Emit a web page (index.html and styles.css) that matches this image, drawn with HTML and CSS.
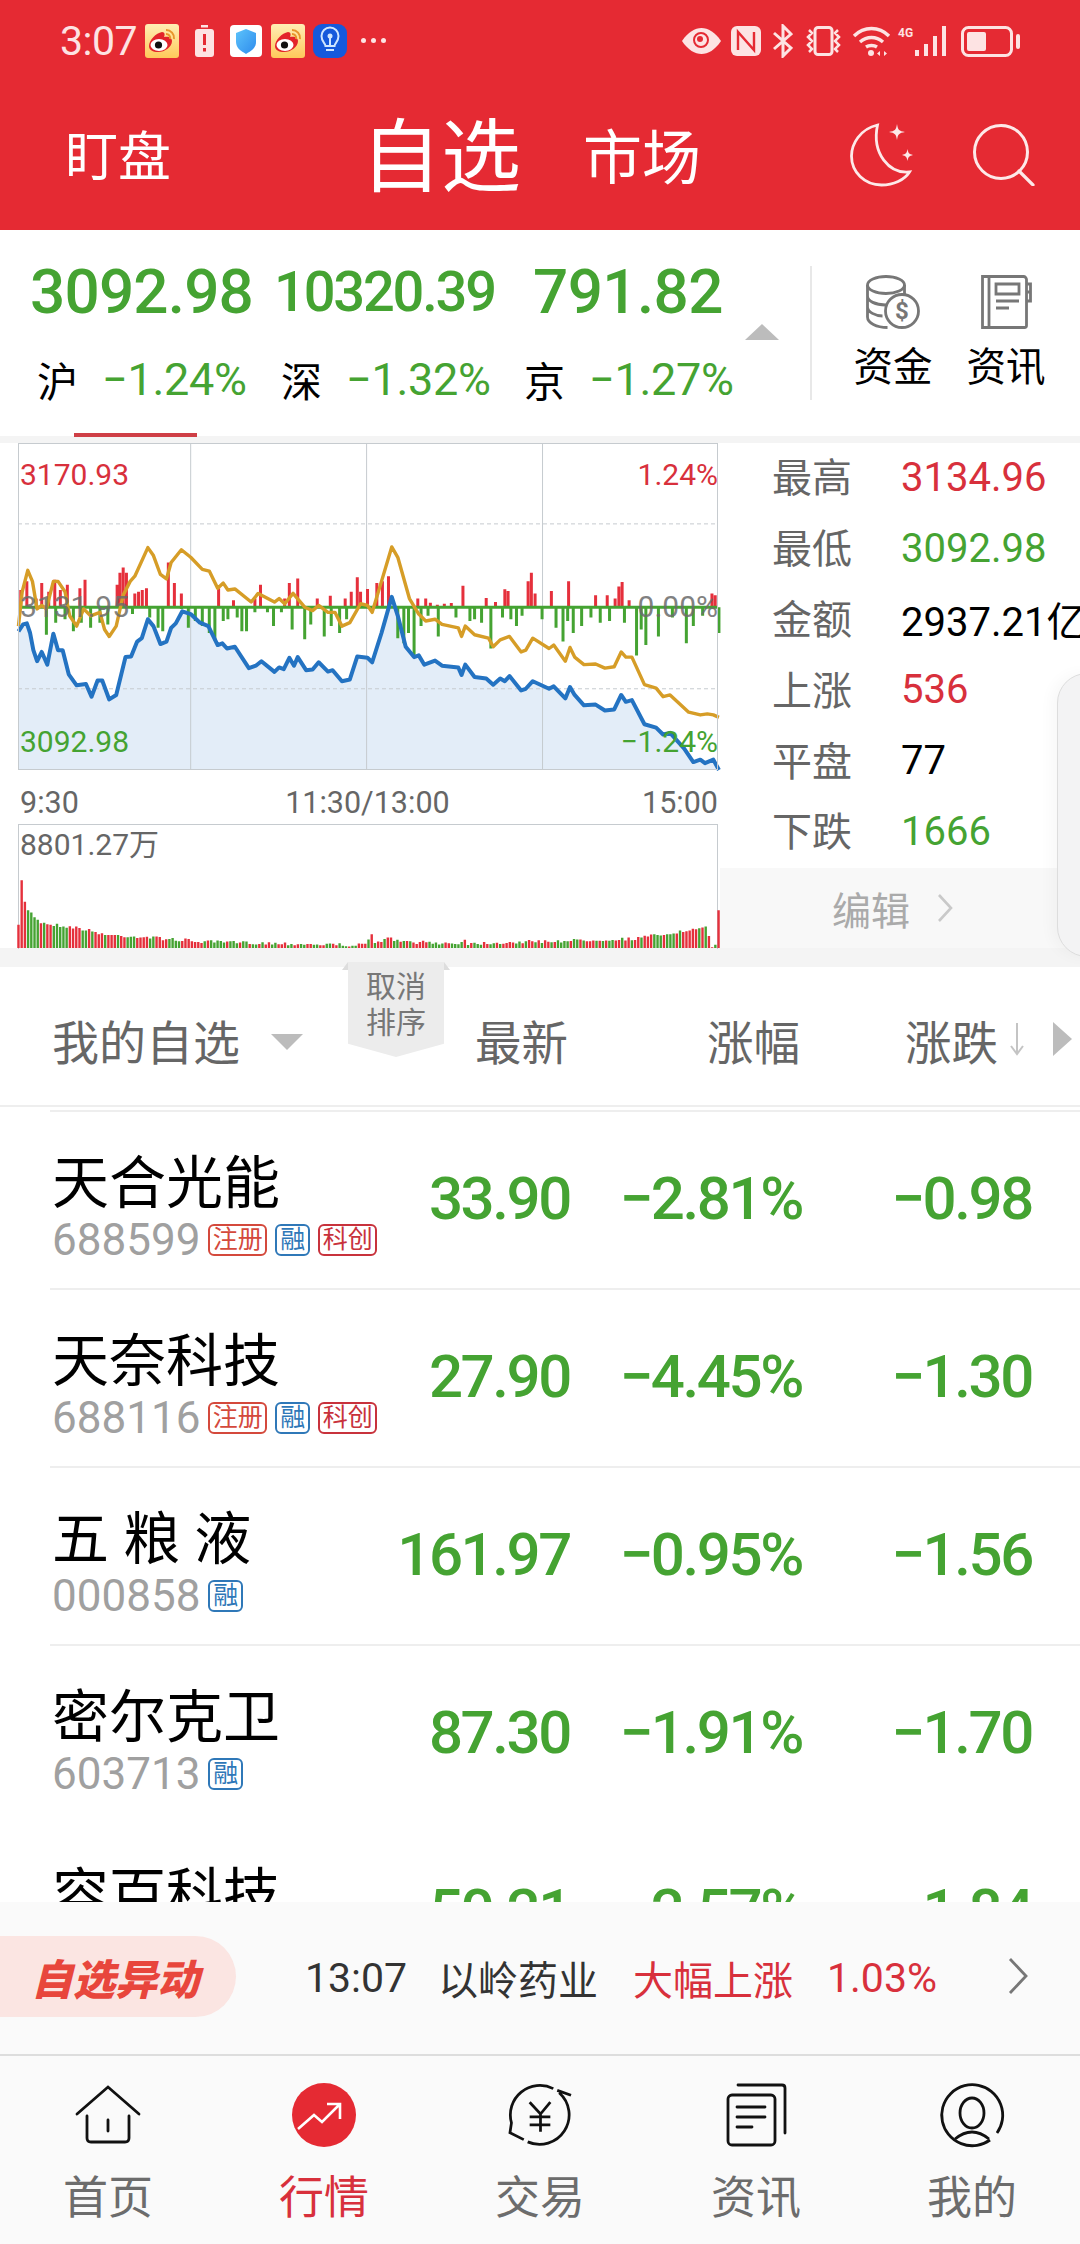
FILE: index.html
```html
<!DOCTYPE html>
<html lang="zh-CN">
<head>
<meta charset="utf-8">
<title>自选</title>
<link rel="stylesheet" href="styles.css">
</head>
<body>
<svg class="defs" width="0" height="0" aria-hidden="true">
  <defs>
    <linearGradient id="wbg" x1="0" y1="0" x2="0" y2="1"><stop offset="0" stop-color="#ffeeb5"/><stop offset="1" stop-color="#ffc95a"/></linearGradient>
    <linearGradient id="shg" x1="0" y1="0" x2="1" y2="1"><stop offset="0" stop-color="#5cc3fb"/><stop offset="1" stop-color="#2e8bec"/></linearGradient>
    <symbol id="weibo" viewBox="0 0 34 34">
      <rect width="34" height="34" rx="3" fill="url(#wbg)"/>
      <path d="M4 22c0-6 7-13 13-14 3 0 3 3 2 5 4-1 8 0 8 4 0 6-7 11-14 11-5 0-9-2-9-6z" fill="#e3232a"/>
      <ellipse cx="14" cy="21" rx="8.5" ry="6" fill="#fff"/>
      <circle cx="13.5" cy="21" r="3.6" fill="#111"/>
      <path d="M21 6a8 8 0 0 1 8 9M21 10a4 4 0 0 1 4 5" fill="none" stroke="#e8952c" stroke-width="2"/>
    </symbol>
  </defs>
</svg>
<div class="app">
  <header class="top">
    <div class="status">
      <span class="clock">3:07</span>
      <svg class="si s-w1"><use href="#weibo"/></svg>
      <svg class="s-batt" viewBox="0 0 19 32"><rect x="6" width="7" height="2.5" fill="#fde3e3"/><rect y="4" width="19" height="28" rx="3" fill="#fde3e3"/><rect x="8" y="9" width="3" height="11" fill="#e52a33"/><rect x="8" y="23" width="3" height="3.5" fill="#e52a33"/></svg>
      <svg class="s-shield" viewBox="0 0 32 32"><rect width="32" height="32" rx="4" fill="#fff"/><path d="M16 4l10 4v9c0 6-5 9-10 12C11 26 6 23 6 17V8z" fill="url(#shg)"/></svg>
      <svg class="si s-w2"><use href="#weibo"/></svg>
      <svg class="s-bulb" viewBox="0 0 34 34"><rect width="34" height="34" rx="9" fill="#1559dc"/><path d="M12.500 22c0-3-4-4-4-10a8.500 8.500 0 0 1 17 0c0 6-4 7-4 10zM13 26h8" fill="none" stroke="#cfe6ff" stroke-width="2"/><path d="M17 12v9" stroke="#cfe6ff" stroke-width="2"/><circle cx="17" cy="12" r="2.500" fill="#cfe6ff"/></svg>
      <span class="s-dots"><i></i><i></i><i></i></span>
      <span class="status-gap"></span>
      <svg class="r-eye" viewBox="0 0 39 26"><path d="M0 13C6 4 13 0 19.500 0S33 4 39 13c-6 9-13 13-19.500 13S6 22 0 13z" fill="#fde3e3"/><circle cx="19" cy="12" r="7" fill="none" stroke="#e52a33" stroke-width="2"/><circle cx="18" cy="11" r="3" fill="#e52a33"/></svg>
      <svg class="r-nfc" viewBox="0 0 30 30"><rect width="30" height="30" rx="6" fill="#fde3e3"/><path d="M7 24V6l16 18V6" fill="none" stroke="#e52a33" stroke-width="2.400"/></svg>
      <svg class="r-bt" viewBox="0 0 21 34"><path d="M2 9l17 15-8 8V2l8 8L2 25" fill="none" stroke="#fde3e3" stroke-width="3"/></svg>
      <svg class="r-vib" viewBox="0 0 37 30"><rect x="10" y="1.500" width="17" height="27" rx="3" fill="none" stroke="#fde3e3" stroke-width="3"/><path d="M4 4l3 3-4 4 4 4-4 4 4 4-3 3M33 4l-3 3 4 4-4 4 4 4-4 4 3 3" fill="none" stroke="#fde3e3" stroke-width="2.500"/></svg>
      <svg class="r-wifi" viewBox="0 0 39 30"><path d="M2 10c10-10 25-10 35 0M8 16c7-6 16-6 23 0M14 21c3-2 8-2 11 0" fill="none" stroke="#fde3e3" stroke-width="3.400"/><circle cx="19" cy="27" r="3" fill="#fde3e3"/><path d="M28 25v5l-3-2.500zM32 25v5l3-2.500z" fill="#fde3e3"/></svg>
      <span class="r-sig"><b class="r-4g">4G</b><svg viewBox="0 0 32 30"><path d="M2 24v6M11 18v12M20 10v20M29 0v30" stroke="#fde3e3" stroke-width="4" fill="none"/></svg></span>
      <svg class="r-bat" viewBox="0 0 59 31"><rect x="1.500" y="1.500" width="49" height="28" rx="6" fill="none" stroke="#fde3e3" stroke-width="3"/><rect x="6" y="6" width="19" height="19" rx="2" fill="#fde3e3"/><rect x="55" y="8" width="4" height="15" rx="2" fill="#fde3e3"/></svg>
    </div>
    <nav class="nav">
      <span class="nav-a">盯盘</span>
      <span class="nav-b">自选</span>
      <span class="nav-c">市场</span>
      <svg class="moon" viewBox="0 0 64 64"><path d="M27.500 2C10 6 1.500 21 1.500 33c0 16 13 29 30 29 12 0 23-5 28-13-20 2-38-18-32-47z" fill="none" stroke="#fde9e9" stroke-width="2.800"/><path d="M47 1c1 6 2 7 8 8-6 1-7 2-8 8-1-6-2-7-8-8 6-1 7-2 8-8zM57.500 26c.7 4 1.500 5 5.500 6-4 1-4.800 2-5.500 6-.7-4-1.500-5-5.500-6 4-1 4.800-2 5.500-6z" fill="#fde9e9"/></svg>
      <svg class="search" viewBox="0 0 62 62"><circle cx="28" cy="28" r="26.500" fill="none" stroke="#fde9e9" stroke-width="3"/><path d="M46 47l14 14" stroke="#fde9e9" stroke-width="3.200" stroke-linecap="round"/></svg>
    </nav>
  </header>

  <section class="indexes">
    <div class="idx">
      <span class="idx-val">3092.98</span>
      <div class="idx-sub"><span class="idx-name">沪</span><span class="idx-pct">−1.24%</span></div>
    </div>
    <div class="idx">
      <span class="idx-val idx-small">10320.39</span>
      <div class="idx-sub"><span class="idx-name">深</span><span class="idx-pct">−1.32%</span></div>
    </div>
    <div class="idx">
      <span class="idx-val idx-third">791.82</span>
      <div class="idx-sub"><span class="idx-name">京</span><span class="idx-pct">−1.27%</span></div>
    </div>
    <span class="idx-caret"></span>
    <div class="quick">
      <div class="quick-item">
        <svg class="q-icon" viewBox="0 0 54 54"><g fill="none" stroke="#777" stroke-width="2.800"><ellipse cx="20" cy="10" rx="18.500" ry="8.500"/><path d="M1.500 10v32c0 6 9 10.500 20 10.500M38.500 10v12M1.500 21c0 5 8 9 18 9 5 0 10-1 13-3M1.500 32c0 5 8 9 15 9"/><circle cx="36" cy="36" r="16.500" fill="#fff"/></g><text class="q-dollar" x="36" y="44">$</text></svg>
        <span>资金</span>
      </div>
      <div class="quick-item">
        <svg class="q-icon q-book" viewBox="0 0 51 54"><g fill="none" stroke="#777" stroke-width="2.800"><path d="M1.500 1.500h41a3 3 0 0 1 3 3v46a2 2 0 0 1-2 2h-42zM8 1.500v51M15 9h23v10H15z"/><path d="M15 26h23M15 33h13M45.500 9h4v17h-4M45.500 17h4"/></g></svg>
        <span>资讯</span>
      </div>
    </div>
    <span class="idx-mark"></span>
  </section>

  <section class="market">
    <div class="chart-col">
      <div class="plot">
        <svg class="plot-svg" viewBox="39 38 1504 950" preserveAspectRatio="none">
          <path class="area" d="M40 585L50 565 58 562 65 590 72 640 80 672 90 645 102 682 115 592 125 640 135 640 148 710 165 742 185 738 197 775 210 728 220 728 235 783 250 770 270 660 282 658 295 615 305 605 318 550 330 570 345 622 358 615 368 575 378 562 392 527 410 535 430 560 448 570 468 625 478 620 488 635 505 630 535 692 550 685 562 672 590 703 600 690 610 695 622 662 632 685 640 660 658 698 672 696 685 675 705 702 715 698 735 730 752 725 768 658 790 662 800 675 820 590 842 485 855 540 872 630 890 660 900 655 912 682 935 670 950 685 985 690 992 712 1000 682 1020 718 1045 722 1060 740 1075 722 1085 730 1095 715 1120 757 1130 752 1145 730 1180 752 1190 745 1215 780 1225 747 1235 770 1255 800 1280 798 1300 815 1320 812 1335 770 1345 790 1358 785 1385 855 1410 865 1425 885 1440 880 1470 925 1490 965 1505 958 1515 968 1533 958 1545 988 40 988Z"/>
          <path class="grid-l" d="M410 38V988M788 38V988M1166 38V988"/>
          <path class="grid-d" d="M39 273H1543M39 752H1543"/>
          <path class="bar-r" d="M45 515V465M58 515V440M78 515V490M90 515V445M105 515V470M118 515V435M130 515V465M145 515V450M172 515V460M183 515V435M252 515V450M258 515V415M265 515V400M272 515V415M290 515V475M298 515V470M306 515V465M315 515V460M362 515V385M375 515V445M390 515V475M470 515V460M502 515V495M548 515V490M560 515V450M612 515V490M622 515V445M640 515V432M682 515V490M710 515V482M742 515V490M755 515V470M768 515V428M775 515V470M790 515V462M810 515V445M822 515V440M835 515V425M898 515V490M915 515V490M925 515V502M940 515V508M955 515V505M970 515V503M995 515V453M1045 515V488M1065 515V500M1085 515V463M1092 515V468M1135 515V440M1142 515V415M1150 515V475M1185 515V468M1222 515V440M1280 515V480M1305 515V480M1322 515V490M1330 515V455M1337 515V442M1352 515V495M1530 515V475M1537 515V480"/>
          <path class="bar-g" d="M39 515H1543M100 515V595M120 515V560M140 515V550M158 515V585M175 515V560M195 515V575M215 515V560M232 515V565M285 515V535M322 515V545M340 515V575M350 515V585M390 515V520M405 515V575M420 515V555M435 515V570M450 515V590M462 515V612M480 515V555M490 515V550M510 515V545M520 515V585M530 515V585M548 515V530M575 515V530M588 515V570M605 515V530M628 515V580M655 515V608M668 515V565M697 515V600M712 515V570M730 515V590M745 515V550M855 515V605M868 515V620M878 515V590M890 515V660M905 515V570M920 515V540M942 515V600M980 515V545M1010 515V555M1020 515V550M1035 515V560M1055 515V635M1080 515V545M1098 515V550M1110 515V570M1122 515V540M1165 515V550M1195 515V575M1210 515V615M1220 515V555M1232 515V590M1250 515V570M1270 515V545M1290 515V560M1310 515V555M1342 515V560M1368 515V655M1378 515V580M1388 515V625M1415 515V600M1445 515V545M1475 515V620M1490 515V570M1510 515V540M1545 515V590"/>
          <path class="line-gold" d="M40 570L48 470 60 408 70 440 80 520 90 510 100 520 115 440 125 440 140 470 150 540 165 570 180 520 195 540 215 530 225 580 235 600 250 570 265 480 280 440 290 425 318 342 330 365 345 420 358 433 368 385 390 348 410 370 435 405 450 410 468 460 480 445 490 465 505 462 540 500 555 475 590 500 600 490 612 505 630 475 655 515 672 525 685 510 705 530 720 530 735 570 752 560 775 505 790 510 800 530 820 440 842 340 855 370 880 490 900 535 915 555 935 550 950 565 985 575 992 600 1000 570 1020 595 1050 605 1060 630 1075 610 1095 600 1120 645 1130 640 1145 605 1180 635 1190 625 1215 672 1225 632 1235 660 1255 682 1280 680 1300 692 1320 688 1335 645 1345 660 1358 660 1385 740 1410 750 1425 775 1440 770 1480 820 1505 828 1520 825 1533 828 1545 835"/>
          <path class="line-blue" d="M40 585L50 565 58 562 65 590 72 640 80 672 90 645 102 682 115 592 125 640 135 640 148 710 165 742 185 738 197 775 210 728 220 728 235 783 250 770 270 660 282 658 295 615 305 605 318 550 330 570 345 622 358 615 368 575 378 562 392 527 410 535 430 560 448 570 468 625 478 620 488 635 505 630 535 692 550 685 562 672 590 703 600 690 610 695 622 662 632 685 640 660 658 698 672 696 685 675 705 702 715 698 735 730 752 725 768 658 790 662 800 675 820 590 842 485 855 540 872 630 890 660 900 655 912 682 935 670 950 685 985 690 992 712 1000 682 1020 718 1045 722 1060 740 1075 722 1085 730 1095 715 1120 757 1130 752 1145 730 1180 752 1190 745 1215 780 1225 747 1235 770 1255 800 1280 798 1300 815 1320 812 1335 770 1345 790 1358 785 1385 855 1410 865 1425 885 1440 880 1470 925 1490 965 1505 958 1515 968 1533 958 1545 988"/>
        </svg>
        <span class="pl pl-tl up">3170.93</span>
        <span class="pl pl-tr up">1.24%</span>
        <span class="pl pl-ml mid">3131.95</span>
        <span class="pl pl-mr mid">0.00%</span>
        <span class="pl pl-bl down">3092.98</span>
        <span class="pl pl-br down">−1.24%</span>
      </div>
      <div class="axis"><span>9:30</span><span class="axis-mid">11:30/13:00</span><span>15:00</span></div>
      <div class="vol">
        <svg class="vol-svg" viewBox="39 1142 1504 361" preserveAspectRatio="none">
          <path id="vol-r" class="vb-r"/>
          <path id="vol-g" class="vb-g"/>
        </svg>
        <span class="vol-label">8801.27万</span>
      </div>
    </div>
    <aside class="stats">
      <dl class="stat-grid">
        <dt>最高</dt><dd class="up">3134.96</dd>
        <dt>最低</dt><dd class="down">3092.98</dd>
        <dt>金额</dt><dd>2937.21亿</dd>
        <dt>上涨</dt><dd class="up">536</dd>
        <dt>平盘</dt><dd>77</dd>
        <dt>下跌</dt><dd class="down">1666</dd>
      </dl>
      <div class="edit"><span>编辑</span><svg class="edit-chev" viewBox="0 0 16 30"><path d="M2 2l12 13L2 28" fill="none" stroke="#c9c9c9" stroke-width="2.600"/></svg></div>
    </aside>
    <div class="side-tab"></div>
  </section>

  <section class="list">
    <div class="list-head">
      <div class="lh-name"><span>我的自选</span><i class="lh-caret"></i></div>
      <span class="lh-col">最新</span>
      <span class="lh-col">涨幅</span>
      <span class="lh-col lh-sort">涨跌<svg class="lh-arrow" viewBox="0 0 14 34"><path d="M7 1v31M1 24l6 8 6-8" fill="none" stroke="#c4c4c4" stroke-width="2"/></svg></span>
      <i class="lh-next"></i>
    </div>
    <div class="sort-tag"><span>取消</span><span>排序</span></div>
    <div class="rows">
      <article class="row">
        <div class="who"><div class="name">天合光能</div><div class="code">688599<span class="tag t-reg">注册</span><span class="tag t-rz">融</span><span class="tag t-kc">科创</span></div></div>
        <span class="num">33.90</span><span class="num">−2.81%</span><span class="num">−0.98</span>
      </article>
      <article class="row">
        <div class="who"><div class="name">天奈科技</div><div class="code">688116<span class="tag t-reg">注册</span><span class="tag t-rz">融</span><span class="tag t-kc">科创</span></div></div>
        <span class="num">27.90</span><span class="num">−4.45%</span><span class="num">−1.30</span>
      </article>
      <article class="row">
        <div class="who"><div class="name">五 粮 液</div><div class="code">000858<span class="tag t-rz">融</span></div></div>
        <span class="num">161.97</span><span class="num">−0.95%</span><span class="num">−1.56</span>
      </article>
      <article class="row">
        <div class="who"><div class="name">密尔克卫</div><div class="code">603713<span class="tag t-rz">融</span></div></div>
        <span class="num">87.30</span><span class="num">−1.91%</span><span class="num">−1.70</span>
      </article>
      <article class="row row-last">
        <div class="who"><div class="name">容百科技</div></div>
        <span class="num">50.21</span><span class="num">−2.57%</span><span class="num">−1.84</span>
      </article>
    </div>
  </section>

  <section class="ticker">
    <div class="pill">自选异动</div>
    <span class="t-time">13:07</span>
    <span class="t-stock">以岭药业</span>
    <span class="t-event">大幅上涨</span>
    <span class="t-pct">1.03%</span>
    <svg class="t-chev" viewBox="0 0 20 36"><path d="M2 1l16 17L2 35" fill="none" stroke="#777" stroke-width="2.800"/></svg>
  </section>

  <footer class="tabs">
    <div class="tab">
      <svg class="tab-i" viewBox="0 0 64 64"><g fill="none" stroke="#111" stroke-width="2.800" stroke-linecap="round"><path d="M1 31L32 4l31 27M11 33v22q0 4 4 4h34q4 0 4-4V33M32 37v11"/></g></svg>
      <span>首页</span>
    </div>
    <div class="tab tab-on">
      <svg class="tab-i" viewBox="0 0 64 64"><circle cx="32" cy="32" r="32" fill="#e52a33"/><path d="M6 46l16-14 8 7 18-18M35 21h13v15" fill="none" stroke="#fff" stroke-width="2.600"/></svg>
      <span>行情</span>
    </div>
    <div class="tab">
      <svg class="tab-i tab-ex" viewBox="0 0 65 64"><g fill="none" stroke="#111" stroke-width="2.800"><path d="M46 5.200A30 30 0 0 0 3.500 40L2 50l14 7M20 59.300A30 30 0 0 0 52 9.400M50 7l14 5"/><path d="M22 19l11 12 10-12M22 34h21M22 42h21M33 31v18"/></g></svg>
      <span>交易</span>
    </div>
    <div class="tab">
      <svg class="tab-i" viewBox="0 0 64 64"><g fill="none" stroke="#111" stroke-width="2.800" stroke-linecap="round"><rect x="4" y="12" width="47" height="50" rx="4"/><path d="M14 2h44q3 0 3 3v45M13 24h28M13 34h28M13 44h15"/></g></svg>
      <span>资讯</span>
    </div>
    <div class="tab">
      <svg class="tab-i" viewBox="0 0 64 64"><g fill="none" stroke="#111" stroke-width="2.800"><path d="M57 50A30.500 30.500 0 1 0 50 57"/><ellipse cx="32" cy="30" rx="12" ry="15"/><path d="M15 56q17-14 34 0"/></g></svg>
      <span>我的</span>
    </div>
  </footer>
</div>
<script src="app.js"></script>
</body>
</html>
```

FILE: styles.css
```css
* { box-sizing: border-box; margin: 0; padding: 0; }
html, body { width: 1080px; height: 2244px; overflow: hidden; background: #fff; }
body { font-family: Roboto, "Noto Sans CJK SC", sans-serif; color: #000; }
.defs { position: absolute; }
.app { width: 1080px; height: 2244px; display: flex; flex-direction: column; position: relative; overflow: hidden; }
.up { color: #d8303c; }
.down { color: #45a332; }
.mid { color: #6c6c6c; }

/* top */
.top { height: 230px; background: #e52a33; color: #fff; flex: none; }
.status { height: 82px; display: flex; align-items: center; padding: 0 60px; color: #fde3e3; }
.clock { font-size: 41px; width: 75px; letter-spacing: -.5px; }
.si { width: 34px; height: 34px; }
.s-w1 { margin-left: 10px; }
.s-batt { width: 19px; height: 32px; margin-left: 16px; }
.s-shield { width: 32px; height: 32px; margin-left: 16px; }
.s-w2 { margin-left: 9px; }
.s-bulb { width: 34px; height: 34px; margin-left: 8px; }
.s-dots { display: flex; gap: 5px; margin-left: 14px; margin-top: -2px; }
.s-dots i { width: 5px; height: 5px; border-radius: 50%; background: #fde3e3; }
.status-gap { flex: 1; }
.r-eye { width: 39px; height: 26px; }
.r-nfc { width: 30px; height: 30px; margin-left: 10px; }
.r-bt { width: 21px; height: 34px; margin-left: 11px; }
.r-vib { width: 37px; height: 30px; margin-left: 12px; }
.r-wifi { width: 39px; height: 30px; margin-left: 10px; }
.r-sig { position: relative; width: 49px; height: 30px; margin-left: 7px; }
.r-sig svg { position: absolute; right: 0; top: 0; width: 32px; height: 30px; }
.r-4g { position: absolute; left: 0; top: 0; font-size: 12px; line-height: 14px; font-weight: 700; }
.r-bat { width: 59px; height: 31px; margin-left: 14px; }

.nav { height: 148px; display: flex; align-items: center; padding: 4px 45px 0 65px; }
.nav-a { font-size: 53px; width: 296px; line-height: 1; white-space: nowrap; }
.nav-b { font-size: 80px; width: 222px; line-height: 1; white-space: nowrap; }
.nav-c { font-size: 59px; width: 267px; line-height: 1; white-space: nowrap; }
.moon { width: 64px; height: 64px; margin-top: -6px; }
.search { width: 62px; height: 62px; margin-left: 59px; margin-top: -6px; }

/* indexes */
.indexes { height: 206px; flex: none; position: relative; display: grid; grid-template-columns: 244px 243px 293px 1fr; padding: 25px 0 0 30px; background: #fff; }
.idx { display: flex; flex-direction: column; }
.idx-val { font-size: 62px; line-height: 74px; font-weight: 500; color: #45a332; letter-spacing: -.8px; }
.idx-small { font-size: 56px; letter-spacing: -2.2px; }
.idx-third { margin-left: 16px; letter-spacing: -.6px; }
.idx-sub { display: flex; align-items: center; margin: 20px 0 0 7px; height: 60px; }
.idx-name { font-size: 41px; width: 65px; }
.idx-pct { font-size: 45px; color: #45a332; letter-spacing: -.3px; }
.idx-caret { position: absolute; left: 745px; top: 94px; width: 0; height: 0; border-left: 17px solid transparent; border-right: 17px solid transparent; border-bottom: 16px solid #bcbcbc; }
.quick { display: flex; border-left: 2px solid #e8e8e8; height: 134px; position: absolute; left: 810px; top: 36px; padding-left: 41px; gap: 33px; }
.quick-item { display: flex; flex-direction: column; align-items: center; font-size: 39.500px; line-height: 48px; width: 80px; }
.q-icon { width: 54px; height: 54px; margin: 9px 0 15px; }
.q-book { width: 51px; }
.q-dollar { font-size: 24px; font-weight: 700; fill: #777; text-anchor: middle; }
.idx-mark { position: absolute; left: 74px; bottom: -1px; width: 123px; height: 4px; background: #cf3f46; z-index: 2; }

/* market */
.market { height: 531px; flex: none; background: #f4f4f4; padding: 7px 0 19px; display: flex; position: relative; }
.chart-col { width: 720px; background: #fff; padding-left: 18px; flex: none; }
.plot { position: relative; width: 700px; height: 327px; background: #fff; }
.plot-svg { position: absolute; inset: 0; width: 100%; height: 100%; overflow: visible; outline: 1px solid #c6cbcf; outline-offset: -1px; }
.plot-svg path { vector-effect: non-scaling-stroke; fill: none; }
.plot-svg .area { fill: #e3edf8; }
.grid-l { stroke: #c6cbcf; stroke-width: 1px; }
.grid-d { stroke: #c6cbcf; stroke-width: 1px; stroke-dasharray: 4 3; }
.bar-r { stroke: #e5303c; stroke-width: 3px; }
.bar-g { stroke: #45a332; stroke-width: 3px; }
.line-gold { stroke: #d69d27; stroke-width: 3.400px; stroke-linejoin: round; }
.line-blue { stroke: #2473c2; stroke-width: 4px; stroke-linejoin: round; }
.pl { position: absolute; font-size: 30px; line-height: 36px; }
.pl-tl { left: 2px; top: 14px; }
.pl-tr { right: 0; top: 14px; }
.pl-ml { left: 2px; top: 146px; opacity: .85; }
.pl-mr { right: 0; top: 146px; opacity: .85; }
.pl-bl { left: 2px; top: 281px; }
.pl-br { right: 0; top: 281px; }
.axis { height: 54px; display: flex; justify-content: space-between; align-items: center; font-size: 30.500px; color: #666; padding: 10px 0 0 2px; width: 700px; }
.axis-mid { margin-left: 14px; }
.vol { position: relative; width: 700px; height: 124px; }
.vol-svg { position: absolute; inset: 0; width: 100%; height: 100%; overflow: visible; }
.vol::before { content: ""; position: absolute; inset: 0 0 -1px 0; border: 1px solid #c6cbcf; border-bottom: 0; }
.vol-svg path { vector-effect: non-scaling-stroke; fill: none; stroke-width: 2.400px; }
.vb-r { stroke: #e5303c; }
.vb-g { stroke: #45a332; }
.vol-label { position: absolute; left: 2px; top: 3px; font-size: 30px; line-height: 36px; color: #666; }

.stats { flex: 1; display: flex; flex-direction: column; background: #fff; }
.stat-grid { display: grid; grid-template-columns: 129px 1fr; grid-auto-rows: 70.800px; padding-left: 52px; align-items: center; height: 425px; }
.stat-grid dt { font-size: 40px; color: #666; margin-top: -6px; }
.stat-grid dd { font-size: 40px; white-space: nowrap; margin-top: -2px; }
.edit { flex: 1; background: #f8f8f8; display: flex; align-items: center; font-size: 39px; color: #aaa; padding-left: 112px; }
.edit-chev { width: 16px; height: 30px; margin-left: 27px; }
.side-tab { position: absolute; left: 1057px; top: 237px; width: 60px; height: 284px; background: #f3f3f4; border: 1px solid #ddd; border-radius: 30px 0 0 30px; box-shadow: -6px 0 14px rgba(0,0,0,.03); }

/* list */
.list { flex: 1; display: flex; flex-direction: column; min-height: 0; position: relative; background: #fff; }
.list-head { height: 140px; flex: none; display: grid; grid-template-columns: 320px 198px 232px 232px 1fr; padding-left: 50px; align-items: center; border-bottom: 2px solid #eee; font-size: 46.500px; color: #666; padding-top: 6px; }
.lh-name { display: flex; align-items: center; padding-left: 2px; font-size: 47px; white-space: nowrap; }
.lh-caret { width: 0; height: 0; margin-left: 31px; margin-top: 6px; border-left: 16px solid transparent; border-right: 16px solid transparent; border-top: 16px solid #bcbcbc; }
.lh-col { text-align: right; position: relative; white-space: nowrap; }
.lh-sort { padding-right: 34px; }
.lh-arrow { position: absolute; right: 8px; top: 16px; width: 14px; height: 34px; }
.lh-next { width: 0; height: 0; margin-left: 21px; border-top: 17px solid transparent; border-bottom: 17px solid transparent; border-left: 19px solid #bcbcbc; }
.sort-tag { position: absolute; left: 348px; top: -5px; width: 96px; height: 95px; background: #ececec; clip-path: polygon(0 0, 100% 0, 100% 86%, 50% 100%, 0 86%); display: flex; flex-direction: column; align-items: center; padding-top: 7px; font-size: 30px; line-height: 36px; color: #777; }
.list::before, .list::after { content: ""; position: absolute; top: -5px; width: 0; height: 0; border-bottom: 8px solid #ddd; }
.list::before { left: 342px; border-left: 6px solid transparent; }
.list::after { left: 444px; border-right: 6px solid transparent; }
.rows { flex: 1; min-height: 0; overflow: hidden; margin-top: 3px; }
.row { height: 178px; margin-left: 50px; border-top: 2px solid #eee; display: grid; grid-template-columns: 320px 200px 232px 230px; }
.row-last { border-top-color: transparent; }
.who { padding: 42px 0 0 2px; white-space: nowrap; }
.name { font-size: 57px; line-height: 60px; white-space: pre; }
.code { font-size: 44px; line-height: 44px; margin-top: 4px; color: #a0a0a0; display: flex; align-items: center; }
.tag { height: 32px; margin-left: 8px; padding: 0 2px; border: 2px solid; border-radius: 6px; font-size: 25px; line-height: 27px; width: 59px; text-align: center; white-space: nowrap; overflow: hidden; flex: none; }
.t-reg { color: #d4493c; }
.t-rz { color: #2f78b8; width: 35px; padding: 0; }
.t-kc { color: #c8323c; }
.num { font-size: 60px; line-height: 70px; margin-top: 52px; font-weight: 500; color: #45a332; text-align: right; letter-spacing: -2.400px; height: 70px; }

/* ticker */
.ticker { height: 152px; flex: none; background: #fafafa; display: flex; align-items: center; position: relative; font-size: 40px; }
.pill { width: 236px; height: 81px; background: #fbe5e2; border-radius: 0 41px 41px 0; display: flex; align-items: center; padding-left: 31px; font-size: 42px; font-weight: 900; font-style: italic; color: #e8463c; white-space: nowrap; flex: none; margin-top: -4px; }
.t-time { margin-left: 69px; color: #333; width: 133px; font-size: 41px; }
.t-stock { color: #333; width: 195px; }
.t-event { color: #d8303c; width: 194px; }
.t-pct { color: #d8303c; width: 181px; font-size: 41px; }
.t-chev { width: 20px; height: 36px; margin-top: -4px; }

/* tabs */
.tabs { height: 190px; flex: none; background: #fafafa; border-top: 2px solid #ddd; display: grid; grid-template-columns: repeat(5, 1fr); }
.tab { display: flex; flex-direction: column; align-items: center; padding-top: 27px; font-size: 45px; line-height: 56px; color: #6c6c6c; }
.tab-i { width: 64px; height: 64px; margin-bottom: 24px; overflow: visible; }
.tab-on { color: #d8303c; }
```

FILE: app.js
```js
// 成交量柱:按分时包络生成,红绿交替
(function () {
  var env = [[40,1440],[46,1290],[52,1365],[60,1390],[70,1405],[90,1430],[170,1445],[230,1465],[300,1470],[440,1485],[785,1495],[798,1462],[806,1492],[830,1472],[860,1485],[990,1490],[995,1472],[1005,1490],[1210,1482],[1360,1476],[1520,1445],[1530,1500],[1537,1500],[1543,1390]];
  function level(x) {
    for (var i = 1; i < env.length; i++) {
      if (x <= env[i][0]) {
        var a = env[i - 1], b = env[i];
        return a[1] + (b[1] - a[1]) * (x - a[0]) / (b[0] - a[0]);
      }
    }
    return 1390;
  }
  var seed = 7;
  function rnd() { seed = (seed * 16807) % 2147483647; return seed / 2147483647; }
  var red = "", green = "";
  for (var x = 40; x <= 1545; x += 6.9) {
    var t = level(x) + (rnd() - 0.5) * 10;
    var seg = "M" + x.toFixed(1) + " 1503V" + Math.min(t, 1501).toFixed(1);
    var isRed = x < 47 || x > 1538 || rnd() < 0.5;
    if (isRed) red += seg; else green += seg;
  }
  document.getElementById("vol-r").setAttribute("d", red);
  document.getElementById("vol-g").setAttribute("d", green);
})();
```
